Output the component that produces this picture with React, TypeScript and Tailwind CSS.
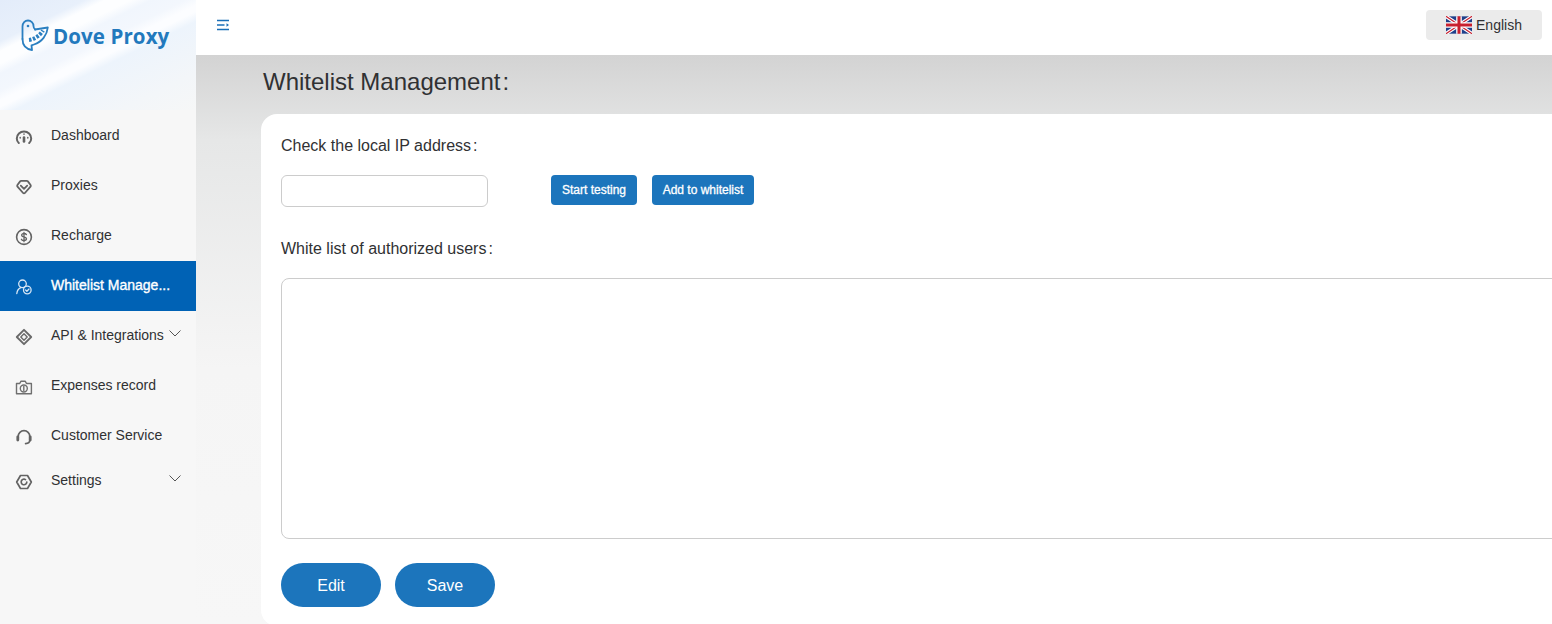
import React from "react";

const ic = { width: 18, height: 18, viewBox: "0 0 18 18", fill: "none", stroke: "#636363", strokeWidth: 1.7, strokeLinecap: "round" as const, strokeLinejoin: "round" as const };

const Gauge = () => (
  <svg {...ic}><path d="M3.800 15C2.500 13.800 1.800 12.200 1.800 10.500 1.800 6.600 5 3.500 9 3.500s7.200 3.100 7.200 7c0 1.700-.7 3.300-2 4.500" strokeWidth="2" /><path d="M9 9.500v4" strokeWidth="2.600" /><path d="M5.200 9.500v.5M12.800 9.500v.5M9 6v.3" strokeWidth="1.500" /></svg>
);
const Gem = () => (
  <svg {...ic} strokeWidth="1.800"><path d="M6.300 2.800h5.400a1.500 1.500 0 0 1 1.200.6L15.600 7a1.300 1.300 0 0 1-.1 1.600L9.900 15a1.200 1.200 0 0 1-1.800 0L2.500 8.600A1.300 1.300 0 0 1 2.400 7l2.700-3.600a1.500 1.500 0 0 1 1.200-.6z" /><path d="M5.800 7.600 9 10.800 12.200 7.600" /></svg>
);
const Dollar = () => (
  <svg {...ic} strokeWidth="1.600"><circle cx="9" cy="9" r="7.400" /><path d="M11.400 6.600C11 5.900 10 5.500 9 5.500c-1.300 0-2.400.7-2.400 1.800 0 2.400 4.900 1 4.900 3.400 0 1.100-1.100 1.800-2.500 1.800-1.100 0-2.100-.4-2.600-1.200M9 4.300v9.400" strokeWidth="1.300" /></svg>
);
const UserCheck = () => (
  <svg {...ic} stroke="#d6e6f5" strokeWidth="1.300"><circle cx="7.500" cy="5.800" r="3.800" /><path d="M1.800 15.500c.4-3 2-5 4-5.800" /><circle cx="12.300" cy="12" r="3.800" /><path d="M10.600 12l1.300 1.300 2.100-2.300" /></svg>
);
const Diamond = () => (
  <svg {...ic} stroke="#6a6a6a" strokeWidth="1.900"><path d="M9 1.800 16.200 9 9 16.200 1.800 9z" /><path d="M9 5.800 12.200 9 9 12.200 5.800 9z" strokeWidth="1.400" /></svg>
);
const Camera = () => (
  <svg {...ic} stroke="#707070" strokeWidth="1.400"><path d="M1.500 5.500h3.200l1.200-2.200h4.400l1.200 2.200h4.900v10.300H1.500z" /><circle cx="8.800" cy="10.500" r="3.500" /><path d="M8.800 8.400v4.200" /></svg>
);
const Headset = () => (
  <svg {...ic}><path d="M3.200 10V8.500a5.800 5.800 0 0 1 11.600 0v3.500c0 2-1.500 3.500-4.200 3.700" /><path d="M2.800 8.800v3.200" strokeWidth="2.800" /><path d="M15.200 8.800v3.200" strokeWidth="2.800" /></svg>
);
const Gear = () => (
  <svg {...ic}><path d="M5.500 2.500h7L16.300 9l-3.800 6.500h-7L1.700 9z" /><path d="M11.800 9a2.800 2.800 0 1 1-1.300-2.400" /></svg>
);
const Chev = () => (
  <svg width="12" height="7" viewBox="0 0 12 7" fill="none" stroke="#555" strokeWidth="1" className="-mt-[3px]"><path d="M.5.500 6 6 11.500.5" /></svg>
);

const Bird = () => (
  <svg width="30" height="33" viewBox="0 0 30 33" fill="none" stroke="#2a7fc1" strokeWidth="1.800" strokeLinecap="round" strokeLinejoin="round">
    <path d="M2.500 20V7.500C2.500 4 5 1.500 8 1.500s5.500 2.500 5.500 5.500c0 1.500.5 2.700 1.700 3.500" />
    <path d="M15 10.500 27.800 8.500C27 16 22 23 14 25.500l-2.500.8L12 31C6 30 2.500 26 2.500 20" />
    <path d="M9 21c4-.5 10.500-3.500 14-9.500" strokeWidth="4" strokeDasharray="2.600 1.400" strokeLinecap="butt" />
    <circle cx="8" cy="7" r="1.300" fill="#2a7fc1" stroke="none" />
  </svg>
);

const Flag = () => (
  <svg width="26" height="18" viewBox="0 0 60 40">
    <rect width="60" height="40" fill="#1f3f8a" />
    <path d="M0 0 60 40M60 0 0 40" stroke="#fff" strokeWidth="8" />
    <path d="M0 0 60 40M60 0 0 40" stroke="#c8202f" strokeWidth="3" />
    <path d="M30 0v40M0 20h60" stroke="#fff" strokeWidth="13" />
    <path d="M30 0v40M0 20h60" stroke="#c8202f" strokeWidth="7" />
  </svg>
);

const items = [
  { label: "Dashboard", Icon: Gauge, h: "h-[50px]" },
  { label: "Proxies", Icon: Gem, h: "h-[50px]" },
  { label: "Recharge", Icon: Dollar, h: "h-[51px] pb-px" },
  { label: "Whitelist Manage...", Icon: UserCheck, h: "h-[50px] pb-[2px]", active: true },
  { label: "API & Integrations", Icon: Diamond, h: "h-[50px] pb-[2px]", chev: true },
  { label: "Expenses record", Icon: Camera, h: "h-[50px] pb-[2px]" },
  { label: "Customer Service", Icon: Headset, h: "h-[50px] pb-[2px]" },
  { label: "Settings", Icon: Gear, h: "h-[40px] pb-[2px]", chev: true },
];

export default function App() {
  return (
    <div className="flex h-[624px] w-[1552px] overflow-hidden bg-white font-['Liberation_Sans',Arial,sans-serif] text-[#303133]">
      <aside className="flex w-[196px] shrink-0 flex-col bg-[#f7f7f7]">
        <div className="h-[110px] shrink-0 overflow-hidden bg-[linear-gradient(154deg,#e3ecfa_0%,#e8f0fb_20%,#fdfeff_25%,#fdfeff_31%,#f1f6fd_36%,#f3f7fd_44%,#fcfdff_49%,#fcfdff_52%,#edf4fc_57%,#f3f6f9_82%,#f6f7f7_100%)]">
          <div className="flex items-center gap-[3px] pl-[20px] pt-[19px]">
            <Bird />
            <span className="font-['Open_Sans',sans-serif] text-[20.500px] font-bold leading-[32px] tracking-[0.1px] text-[#2279bd]">Dove Proxy</span>
          </div>
        </div>
        <nav className="flex flex-col">
          {items.map(({ label, Icon, h, active, chev }) => (
            <div key={label} className={`flex items-center pl-[15px] pr-[15px] text-[14px] ${h} ${active ? "bg-[#0062b5] text-white [-webkit-text-stroke:0.35px_white]" : "text-[#303133]"}`}>
              <span className="mr-[18px] mt-[4px] flex w-[18px] justify-center"><Icon /></span>
              <span className="flex-1 whitespace-nowrap">{label}</span>
              {chev && <Chev />}
            </div>
          ))}
        </nav>
      </aside>
      <main className="flex min-w-0 flex-1 flex-col">
        <header className="flex h-[55px] shrink-0 items-center justify-between pl-[20px] pr-[10px]">
          <svg width="14" height="12" viewBox="0 0 14 12" fill="none" stroke="#1a6fb8" strokeWidth="1.300" className="-mt-[5px]">
            <path d="M1 1.500h12M1 6h7.500M1 10.500h12" />
            <path d="M10.500 4.200 13 6l-2.500 1.800z" fill="#1a6fb8" stroke="none" />
          </svg>
          <div className="-mt-[5px] flex h-[30px] w-[116px] items-center justify-center gap-[4px] rounded-[4px] bg-[#ebebeb] text-[14px] text-[#303133]">
            <Flag />
            <span>English</span>
          </div>
        </header>
        <div className="min-h-0 flex-1 bg-[linear-gradient(180deg,#d3d3d3_0%,#e6e7e7_15%,#f5f5f5_55%,#f7f7f7_100%)] pl-[65px]">
          <h1 className="h-[59px] pl-[2px] pt-[11px] text-[24px] font-normal leading-[32px] text-[#303133]">Whitelist Management<span className="ml-[2px]">:</span></h1>
          <section className="h-[512px] w-[1330px] rounded-[16px] bg-white pl-[20px] pt-[22px]">
            <p className="h-[20px] text-[16px] leading-[20px] text-[#303133]">Check the local IP address<span className="ml-[2px]">:</span></p>
            <div className="mt-[19px] flex items-start">
              <input className="h-[32px] w-[207px] rounded-[6px] border border-[#cccccc] bg-white outline-none" />
              <button className="ml-[63px] h-[30px] w-[86px] rounded-[4px] bg-[#1c75bc] text-[12px] text-white [-webkit-text-stroke:0.3px_white]">Start testing</button>
              <button className="ml-[15px] h-[30px] w-[102px] rounded-[4px] bg-[#1c75bc] text-[12px] text-white [-webkit-text-stroke:0.3px_white]">Add to whitelist</button>
            </div>
            <p className="mt-[32px] h-[20px] text-[16px] leading-[20px] text-[#303133]">White list of authorized users<span className="ml-[2px]">:</span></p>
            <textarea className="mt-[19px] block h-[261px] w-[1300px] resize-none rounded-[8px] border border-[#cccccc] outline-none" />
            <div className="mt-[24px] flex gap-[14px]">
              <button className="h-[44px] w-[100px] rounded-full bg-[#1c75bc] pt-px text-[16px] text-white">Edit</button>
              <button className="h-[44px] w-[100px] rounded-full bg-[#1c75bc] pt-px text-[16px] text-white">Save</button>
            </div>
          </section>
        </div>
      </main>
    </div>
  );
}
